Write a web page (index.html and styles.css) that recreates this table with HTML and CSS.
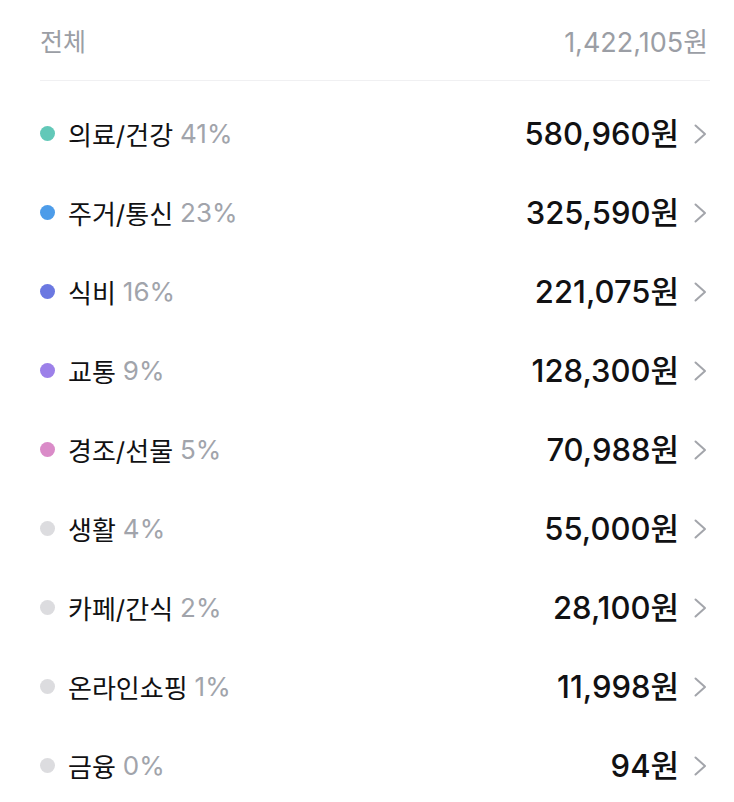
FILE: index.html
```html
<!DOCTYPE html>
<html lang="ko">
<head>
<meta charset="utf-8">
<link rel="stylesheet" href="styles.css">
</head>
<body>
<div class="panel">
  <div class="header">
    <span class="header-label">전체</span>
    <span class="header-total">1,422,105원</span>
  </div>
  <ul class="list">
    <li class="row"><span class="dot c1"></span><span class="name">의료/건강</span><span class="pct">41%</span><span class="amount">580,960원</span><svg class="chev" viewBox="0 0 14 22"><path d="M2.5 2.5 L12 11 L2.5 19.5"/></svg></li>
    <li class="row"><span class="dot c2"></span><span class="name">주거/통신</span><span class="pct">23%</span><span class="amount">325,590원</span><svg class="chev" viewBox="0 0 14 22"><path d="M2.5 2.5 L12 11 L2.5 19.5"/></svg></li>
    <li class="row"><span class="dot c3"></span><span class="name">식비</span><span class="pct">16%</span><span class="amount">221,075원</span><svg class="chev" viewBox="0 0 14 22"><path d="M2.5 2.5 L12 11 L2.5 19.5"/></svg></li>
    <li class="row"><span class="dot c4"></span><span class="name">교통</span><span class="pct">9%</span><span class="amount">128,300원</span><svg class="chev" viewBox="0 0 14 22"><path d="M2.5 2.5 L12 11 L2.5 19.5"/></svg></li>
    <li class="row"><span class="dot c5"></span><span class="name">경조/선물</span><span class="pct">5%</span><span class="amount">70,988원</span><svg class="chev" viewBox="0 0 14 22"><path d="M2.5 2.5 L12 11 L2.5 19.5"/></svg></li>
    <li class="row"><span class="dot c0"></span><span class="name">생활</span><span class="pct">4%</span><span class="amount">55,000원</span><svg class="chev" viewBox="0 0 14 22"><path d="M2.5 2.5 L12 11 L2.5 19.5"/></svg></li>
    <li class="row"><span class="dot c0"></span><span class="name">카페/간식</span><span class="pct">2%</span><span class="amount">28,100원</span><svg class="chev" viewBox="0 0 14 22"><path d="M2.5 2.5 L12 11 L2.5 19.5"/></svg></li>
    <li class="row"><span class="dot c0"></span><span class="name">온라인쇼핑</span><span class="pct">1%</span><span class="amount">11,998원</span><svg class="chev" viewBox="0 0 14 22"><path d="M2.5 2.5 L12 11 L2.5 19.5"/></svg></li>
    <li class="row"><span class="dot c0"></span><span class="name">금융</span><span class="pct">0%</span><span class="amount">94원</span><svg class="chev" viewBox="0 0 14 22"><path d="M2.5 2.5 L12 11 L2.5 19.5"/></svg></li>
  </ul>
</div>
</body>
</html>
```
FILE: styles.css
```css
html, body {
  margin: 0;
  padding: 0;
  background: #ffffff;
}
body {
  font-family: "Inter", "Noto Sans CJK KR", sans-serif;
  color: #1a1a1c;
}
.panel {
  padding: 0 24px 0 40px;
}
.header {
  height: 80px;
  display: flex;
  align-items: center;
  justify-content: space-between;
  border-bottom: 1.5px solid #f0f0f2;
  color: #9b9ea5;
  font-size: 25px;
}
.header-total {
  margin-right: 2px;
  font-size: 27px;
}
.list {
  list-style: none;
  margin: 0;
  padding: 13px 0 0 0;
}
.row {
  height: 79px;
  display: flex;
  align-items: center;
  font-size: 26px;
}
.dot {
  width: 15px;
  height: 15px;
  border-radius: 50%;
  margin-right: 13px;
  flex: none;
}
.c1 { background: #62c8b8; }
.c2 { background: #4d9ce9; }
.c3 { background: #6b78e1; }
.c4 { background: #9c80e9; }
.c5 { background: #da8bc8; }
.c0 { background: #dcdcdf; }
.name {
  color: #111113;
}
.pct {
  color: #a1a4ab;
  margin-left: 7px;
}
.amount {
  margin-left: auto;
  padding-bottom: 4px;
  font-size: 31px;
  font-weight: 500;
  color: #111113;
}
.chev {
  width: 14px;
  height: 22px;
  margin-left: 14px;
  margin-right: 3px;
  fill: none;
  stroke: #a3a5ab;
  stroke-width: 2;
  stroke-linecap: round;
  stroke-linejoin: round;
}
```
